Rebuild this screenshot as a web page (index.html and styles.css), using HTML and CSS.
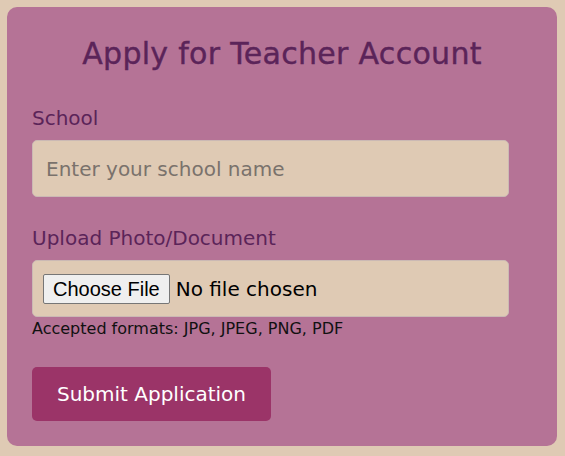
FILE: index.html
```html
<!DOCTYPE html>
<html lang="en">
<head>
<meta charset="utf-8">
<title>Apply for Teacher Account</title>
<link rel="stylesheet" href="styles.css">
</head>
<body>
<form class="card">
  <h1 class="title">Apply for Teacher Account</h1>
  <div class="field">
    <label class="label" for="school">School</label>
    <input class="input" id="school" type="text" placeholder="Enter your school name">
  </div>
  <div class="field">
    <label class="label" for="doc">Upload Photo/Document</label>
    <input class="input file" id="doc" type="file">
    <p class="hint">Accepted formats: JPG, JPEG, PNG, PDF</p>
  </div>
  <button class="submit" type="button">Submit Application</button>
</form>
</body>
</html>
```
FILE: styles.css
```css
html, body {
  margin: 0;
  background: #dfcab4;
}
body {
  padding: 7px;
  font-family: "DejaVu Sans", "Noto Sans", sans-serif;
}
.card {
  width: 550px;
  height: 439px;
  box-sizing: border-box;
  background: #b57396;
  border-radius: 10px;
  padding: 27px 25px 0;
}
.title {
  margin: 0 0 30px;
  text-align: center;
  font-size: 30px;
  font-weight: normal;
  letter-spacing: 0.3px;
  -webkit-text-stroke: 0.4px #5b2459;
  color: #5b2459;
  line-height: 40px;
}
.field {
  display: flex;
  flex-direction: column;
  margin-bottom: 27px;
}
.label {
  font-size: 20px;
  color: #5b2459;
  line-height: 28px;
  margin-bottom: 8px;
}
.input {
  width: 477px;
  height: 57px;
  box-sizing: border-box;
  margin: 0;
  padding: 0 13px;
  background: #dfcab4;
  border: 1px solid #cbb9b4;
  border-radius: 5px;
  font-family: inherit;
  font-size: 20px;
  color: #333;
  outline: none;
}
.input::placeholder {
  color: #7a726c;
}
.file {
  padding: 13px 10px 0;
  font-size: 20px;
  color: #000;
}
.file::file-selector-button {
  font-family: "Liberation Sans", Arial, sans-serif;
  font-size: 20px;
  height: 30px;
  padding: 0 9px;
  margin-right: 6px;
  background: #efefef;
  border: 1px solid #767676;
  border-radius: 2px;
  color: #000;
}
.hint {
  margin: 0;
  font-size: 16px;
  color: #111;
  line-height: 24px;
}
.submit {
  width: 239px;
  height: 54px;
  margin-top: -1px;
  border: none;
  border-radius: 5px;
  background: #9b3468;
  color: #fff;
  font-family: inherit;
  font-size: 20px;
  padding: 0;
}
```
